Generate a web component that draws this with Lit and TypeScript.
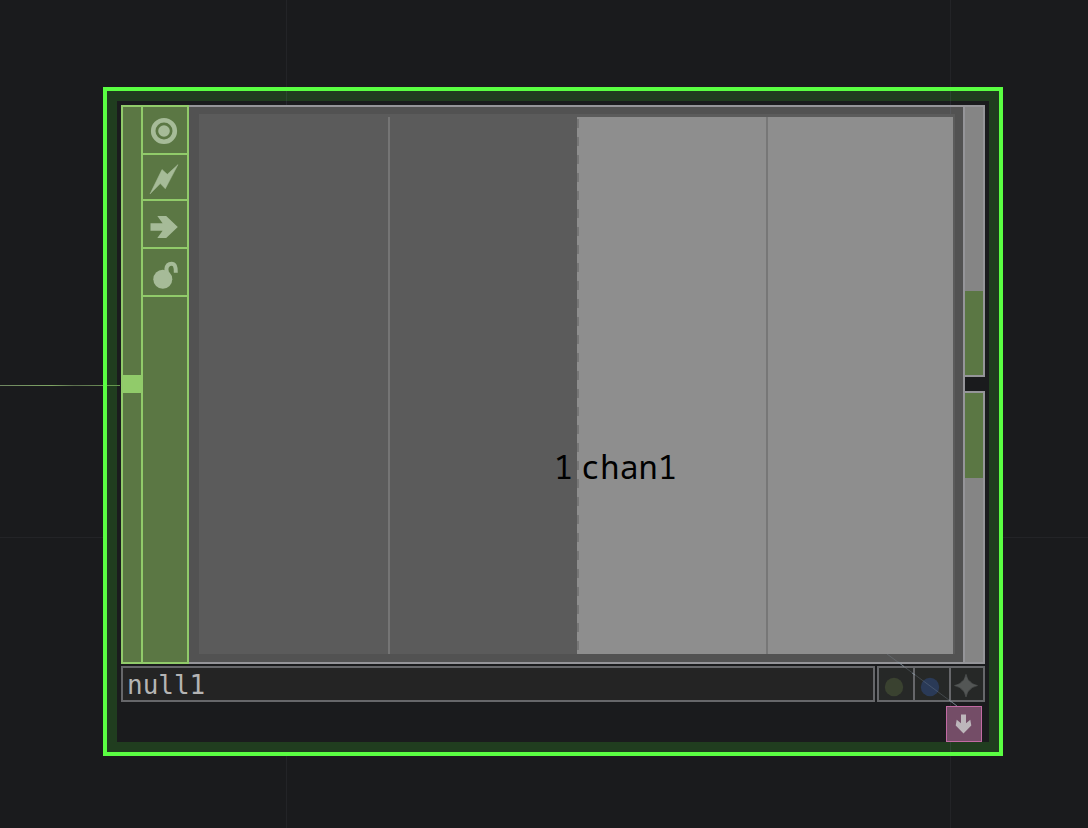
import { LitElement, html, css, svg } from "lit";
import { customElement } from "lit/decorators.js";

@customElement("app-root")
export class AppRoot extends LitElement {
  static styles = css`
    :host {
      display: block;
      position: relative;
      width: 1088px;
      height: 828px;
      overflow: hidden;
      background: #1a1b1d;
      font-family: "Noto Sans Mono", "DejaVu Sans Mono", monospace;
    }
    * { box-sizing: border-box; }
    svg { display: block; }
    .overlay { position: absolute; inset: 0; pointer-events: none; }
    .node {
      position: absolute;
      left: 103px;
      top: 87px;
      width: 900px;
      height: 669px;
      border: 4px solid #5aff42;
      background: #203d1f;
      padding: 10px;
    }
    .inner {
      height: 641px;
      background: #1a1b1d;
      padding: 4px 4px 0;
    }
    .body { display: flex; height: 559px; }
    .left {
      width: 68px;
      display: flex;
      border: 2px solid #91cb6a;
      background: #5b7744;
    }
    .input { width: 20px; border-right: 2px solid #91cb6a; padding-top: 268px; }
    .plug { width: 18px; height: 18px; background: #91cb6a; }
    .flags { width: 44px; }
    .flag { height: 48px; border-bottom: 2px solid #91cb6a; }
    .flag.short { height: 46px; }
    .flag svg, .toggle svg, .dock svg { filter: blur(0.5px); }
    .frame {
      width: 774px;
      background: #525252;
      border: solid #959599;
      border-width: 2px 0;
      padding: 7px 8px 8px 10px;
    }
    .viewer {
      width: 756px;
      height: 540px;
      background: #5b5b5b;
      display: flex;
      padding: 3px 2px 0 0;
    }
    .half { position: relative; width: 378px; }
    .half.light { width: 376px; background: #8e8e8e; }
    .rule { width: 2px; height: 537px; margin-left: 189px; background: #777; }
    .half.dark .rule { background: #757575; }
    .label { position: absolute; top: 331px; font-size: 32px; line-height: 38px; color: #000; white-space: nowrap; }
    .label.num { right: 4px; }
    .label.chan { left: 4px; }
    .output { width: 22px; display: flex; flex-direction: column; border-left: 2px solid #959599; }
    .port {
      border: 2px solid #959599;
      border-left: 0;
      background: #858585;
      display: flex;
      flex-direction: column;
    }
    .port.up { height: 272px; justify-content: flex-end; }
    .port.down { height: 273px; margin-top: 14px; }
    .fill { height: 84px; background: #5b7744; }
    .down .fill { height: 85px; }
    .footer { display: flex; gap: 2px; margin-top: 2px; height: 36px; }
    .name {
      width: 754px;
      border: 2px solid #66676a;
      background: #242424;
      color: #b4b4b4;
      font-family: "DejaVu Sans Mono", monospace;
      font-size: 26px;
      line-height: 34px;
      padding-left: 4px;
    }
    .toggles { display: flex; width: 108px; border: 2px solid #66676a; background: #262827; }
    .toggle { width: 36px; border-right: 2px solid #66676a; }
    .toggle:last-child { width: 32px; border: 0; }
    .dock {
      width: 36px;
      height: 36px;
      margin: 4px 3px 0 auto;
      border: 1px solid #c26aa3;
      background: #744d67;
    }
  `;

  private viewerFlag = svg`<circle cx="21" cy="24" r="10.8" fill="none" stroke="#a6bb98" stroke-width="4.6"/><circle cx="21" cy="24" r="5.8" fill="#a6bb98"/>`;
  private cookFlag = svg`<path d="M35 9.6 L22.3 33.8 L17.3 28.6 L7 39 L19 14.5 L24.3 19.3Z" fill="#a6bb98" stroke="#a6bb98" stroke-width=".5" stroke-linejoin="round"/>`;
  private arrowFlag = svg`<path d="M7.5 22.3H19.6L14.3 15H23.2L34.8 26L23.2 37H14.3L19.6 29.7H7.5Z" fill="#a6bb98"/>`;
  private lockFlag = svg`<circle cx="19.8" cy="30.3" r="9.5" fill="#a6bb98"/><path d="M24 24L23.4 20C23.8 16.4 26 14.7 28.5 14.7C31.5 14.7 33 17 32.8 23.8" fill="none" stroke="#a6bb98" stroke-width="4"/>`;

  render() {
    return html`
      <svg class="overlay" width="1088" height="828">
        <defs>
          <linearGradient id="wire" gradientUnits="userSpaceOnUse" x1="0" y1="0" x2="103" y2="0">
            <stop offset="0" stop-color="#6f8662" />
            <stop offset=".5" stop-color="#7ea563" />
            <stop offset=".72" stop-color="#5c704f" />
            <stop offset="1" stop-color="#6a8b55" />
          </linearGradient>
        </defs>
        <path d="M286.5 0V828M950.5 0V828M0 537.5H1088" stroke="#232427" />
        <rect x="0" y="385" width="103" height="1" fill="url(#wire)" />
      </svg>
      <div class="node">
        <div class="inner">
          <div class="body">
            <div class="left">
              <div class="input"><div class="plug"></div></div>
              <div class="flags">
                <div class="flag"><svg width="44" height="46">${this.viewerFlag}</svg></div>
                <div class="flag short"><svg width="44" height="44">${this.cookFlag}</svg></div>
                <div class="flag"><svg width="44" height="46">${this.arrowFlag}</svg></div>
                <div class="flag"><svg width="44" height="46">${this.lockFlag}</svg></div>
              </div>
            </div>
            <div class="frame">
              <div class="viewer">
                <div class="half dark"><div class="rule"></div><span class="label num">1</span></div>
                <div class="half light"><div class="rule"></div><span class="label chan">chan1</span></div>
              </div>
            </div>
            <div class="output">
              <div class="port up"><div class="fill"></div></div>
              <div class="port down"><div class="fill"></div></div>
            </div>
          </div>
          <div class="footer">
            <div class="name">null1</div>
            <div class="toggles">
              <div class="toggle"><svg width="34" height="32"><circle cx="15" cy="19" r="9.2" fill="#3a4230"/></svg></div>
              <div class="toggle"><svg width="34" height="32"><circle cx="15" cy="19" r="9.2" fill="#2a3a57"/></svg></div>
              <div class="toggle"><svg width="32" height="32"><path d="M15 6.3Q16.5 12.5 19 13.6Q20.5 16 26.5 17.6Q20.5 19.2 19 21.6Q16.5 22.7 15 29Q13.5 22.7 11 21.6Q9.5 19.2 3.5 17.6Q9.5 16 11 13.6Q13.5 12.5 15 6.3Z" fill="#535655" stroke="#535655" stroke-width=".6"/></svg></div>
            </div>
          </div>
          <div class="dock"><svg width="34" height="34"><path d="M14 7.6H19V16.2L23.3 12.8L24.3 18.6L16.5 26.4L8.7 18.6L9.7 12.8L14 16.2Z" fill="#bdb6bb"/></svg></div>
        </div>
      </div>
      <svg class="overlay" width="1088" height="828">
        <path d="M107 385.5H120" stroke="#66974f" />
        <path d="M286.5 91V105M950.5 91V114M950.5 702V706M950.5 742V752" stroke="#8088b0" stroke-opacity=".12" />
        <path d="M578 119V654" stroke="#777" stroke-width="2" stroke-dasharray="9 9" />
        <path d="M887 654L957 706" stroke="#8593a0" stroke-opacity=".3" />
        <path d="M898 662L904 666.5M912 673L915 675M949 700L957 706" stroke="#94a3b0" stroke-opacity=".6" />
      </svg>
    `;
  }
}
